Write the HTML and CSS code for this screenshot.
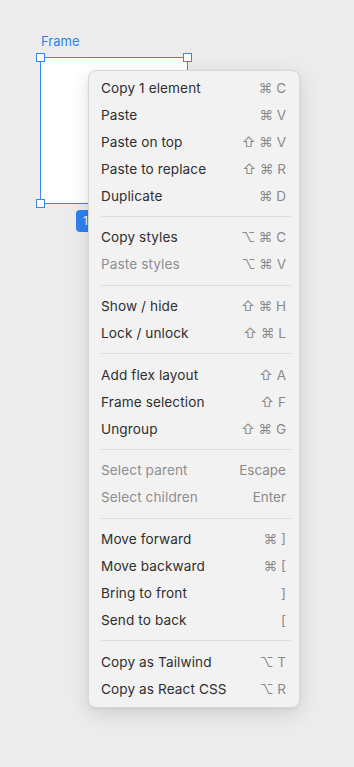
FILE: index.html
```html
<!DOCTYPE html>
<html lang="en">
<head>
  <meta charset="UTF-8" />
  <meta name="viewport" content="width=device-width, initial-scale=1.0" />
  <title>Canvas context menu</title>
  <link rel="stylesheet" href="styles.css">
</head>
<body>
  <div class="canvas">
    <div class="frame-label">Frame</div>
    <div class="frame">
      <span class="handle tl"></span>
      <span class="handle tr"></span>
      <span class="handle bl"></span>
      <span class="handle br"></span>
      <div class="size-badge">147 × 146</div>
    </div>

    <ul class="menu">
      <li class="item"><span>Copy 1 element</span><span class="key">⌘ C</span></li>
      <li class="item"><span>Paste</span><span class="key">⌘ V</span></li>
      <li class="item"><span>Paste on top</span><span class="key">⇧ ⌘ V</span></li>
      <li class="item"><span>Paste to replace</span><span class="key">⇧ ⌘ R</span></li>
      <li class="item"><span>Duplicate</span><span class="key">⌘ D</span></li>
      <li class="sep"></li>
      <li class="item"><span>Copy styles</span><span class="key">⌥ ⌘ C</span></li>
      <li class="item disabled"><span>Paste styles</span><span class="key">⌥ ⌘ V</span></li>
      <li class="sep"></li>
      <li class="item"><span>Show / hide</span><span class="key">⇧ ⌘ H</span></li>
      <li class="item"><span>Lock / unlock</span><span class="key">⇧ ⌘ L</span></li>
      <li class="sep"></li>
      <li class="item"><span>Add flex layout</span><span class="key">⇧ A</span></li>
      <li class="item"><span>Frame selection</span><span class="key">⇧ F</span></li>
      <li class="item"><span>Ungroup</span><span class="key">⇧ ⌘ G</span></li>
      <li class="sep"></li>
      <li class="item disabled"><span>Select parent</span><span class="key">Escape</span></li>
      <li class="item disabled"><span>Select children</span><span class="key">Enter</span></li>
      <li class="sep"></li>
      <li class="item"><span>Move forward</span><span class="key">⌘ ]</span></li>
      <li class="item"><span>Move backward</span><span class="key">⌘ [</span></li>
      <li class="item"><span>Bring to front</span><span class="key">]</span></li>
      <li class="item"><span>Send to back</span><span class="key">[</span></li>
      <li class="sep"></li>
      <li class="item"><span>Copy as Tailwind</span><span class="key">⌥ T</span></li>
      <li class="item"><span>Copy as React CSS</span><span class="key">⌥ R</span></li>
    </ul>
  </div>
</body>
</html>
```

FILE: styles.css
```css
* {
  margin: 0;
  padding: 0;
  box-sizing: border-box;
}

body {
  background: #ececec;
  font-family: 'Inter', 'DejaVu Sans', sans-serif;
  color: #2b2b2b;
}

.canvas {
  position: relative;
  width: 354px;
  height: 767px;
}

.frame-label {
  position: absolute;
  left: 41px;
  top: 33px;
  font-size: 13px;
  color: #2e7ff0;
}

.frame {
  position: absolute;
  left: 40px;
  top: 57px;
  width: 148px;
  height: 147px;
  background: #fff;
  border: 1px solid #3b86f5;
}

.handle {
  position: absolute;
  width: 9px;
  height: 9px;
  background: #fff;
  border: 1px solid #3b86f5;
}

.handle.tl { left: -5px; top: -5px; }
.handle.tr { right: -5px; top: -5px; }
.handle.bl { left: -5px; bottom: -5px; }
.handle.br { right: -5px; bottom: -5px; }

.size-badge {
  position: absolute;
  left: 35px;
  top: 152px;
  height: 22px;
  padding: 0 7px;
  border-radius: 4px;
  background: #2f80f0;
  color: #fff;
  font-size: 12px;
  line-height: 22px;
  white-space: nowrap;
}

.menu {
  position: absolute;
  left: 88px;
  top: 70px;
  width: 212px;
  list-style: none;
  padding: 3px 0 5px;
  background: #f2f2f2;
  border: 1px solid #d8d8d8;
  border-radius: 8px;
  box-shadow: 0 6px 20px rgba(0, 0, 0, 0.12), 0 1px 3px rgba(0, 0, 0, 0.06);
}

.item {
  display: flex;
  justify-content: space-between;
  align-items: center;
  height: 27px;
  padding: 0 13px 0 12px;
  font-size: 13.6px;
  letter-spacing: 0.1px;
  color: #2f2f2f;
}

.item .key {
  color: #8a8a8a;
  font-size: 13.5px;
  letter-spacing: 0;
}

.item.disabled {
  color: #8e8e8e;
}

.sep {
  height: 1px;
  margin: 7px 8px 6.7px 12px;
  background: #dcdcdc;
}
```
